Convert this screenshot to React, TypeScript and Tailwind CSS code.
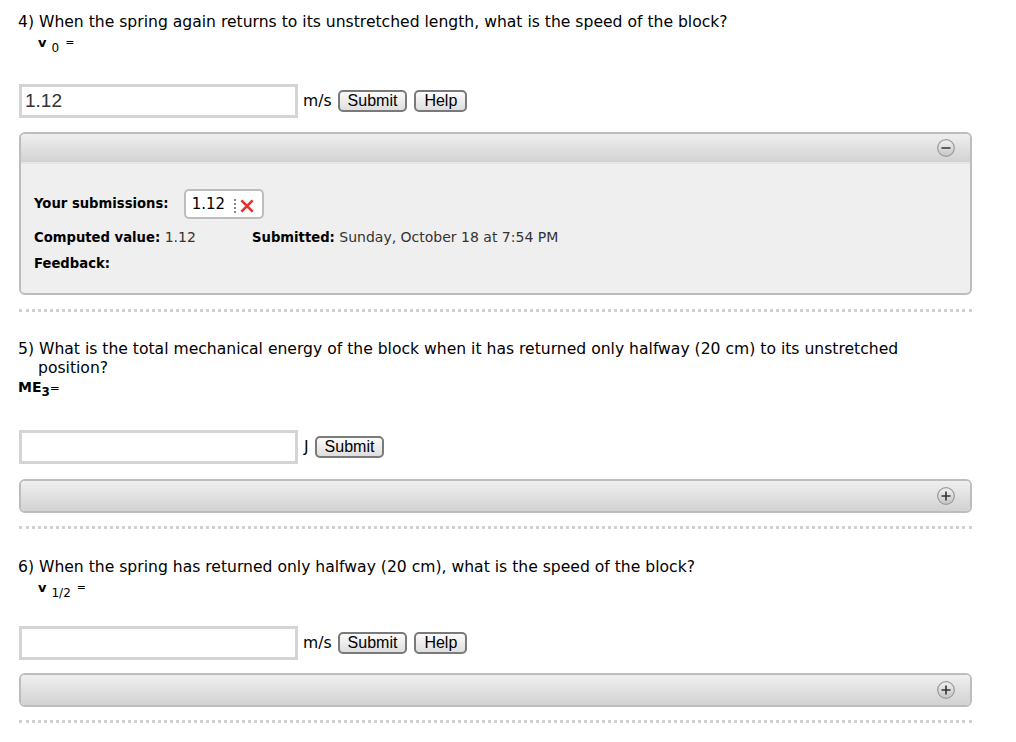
import React from "react";

const font = { fontFamily: '"DejaVu Sans", Verdana, sans-serif' };

function Btn({ children }: { children: React.ReactNode }) {
  return (
    <button
      className="h-[22px] px-[8px] rounded-[5px] border-2 border-[#7a7a7a] bg-gradient-to-b from-[#fbfbfb] to-[#dedede] text-[16px] leading-none text-black"
      style={{ fontFamily: '"Liberation Sans", Arial, sans-serif' }}
    >
      {children}
    </button>
  );
}

function CircleIcon({ plus }: { plus?: boolean }) {
  return (
    <svg width="20" height="20" viewBox="0 0 20 20">
      <defs>
        <linearGradient id={plus ? "gp" : "gm"} x1="0" y1="0" x2="0" y2="1">
          <stop offset="0" stopColor="#f2f2f2" />
          <stop offset="1" stopColor="#c4c4c4" />
        </linearGradient>
      </defs>
      <circle cx="10" cy="10.5" r="8.5" fill="#d8d8d8" opacity="0.6" />
      <circle cx="10" cy="10" r="8.3" fill={`url(#${plus ? "gp" : "gm"})`} stroke="#9a9a9a" strokeWidth="1.2" />
      <line x1="5.5" y1="10" x2="14.5" y2="10" stroke="#333" strokeWidth="1.6" />
      {plus && <line x1="10" y1="5.5" x2="10" y2="14.5" stroke="#333" strokeWidth="1.6" />}
    </svg>
  );
}

function PanelHeader({ open }: { open?: boolean }) {
  return (
    <div
      className={`flex items-center justify-end pr-[14px] bg-gradient-to-b from-[#efefef] to-[#d2d2d2] ${
        open ? "h-[30px] border-b-2 border-[#e6e6e6]" : "h-[30px]"
      }`}
    >
      <CircleIcon plus={!open} />
    </div>
  );
}

function Input({ value }: { value?: string }) {
  return (
    <div
      className="w-[279px] h-[34px] border-[3px] border-[#d4d4d4] bg-white flex items-center pl-[3px] text-[19px] text-[#333]"
      style={{ fontFamily: '"Liberation Sans", Arial, sans-serif' }}
    >
      {value}
    </div>
  );
}

function Dotted() {
  return <div className="mx-[19px] w-[953px] border-t-[3px] border-dotted border-[#d0d0d0]" />;
}

export default function App() {
  return (
    <div className="w-[1016px] h-[742px] bg-white text-[15.6px] text-black overflow-hidden" style={font}>
      {/* Q4 */}
      <div className="pt-[12px] pl-[18px] leading-[20px]">
        4) When the spring again returns to its unstretched length, what is the speed of the block?
      </div>
      <div className="mt-[1px] pl-[38px] h-[22px] leading-[20px] flex items-start">
        <span className="font-bold text-[13px]">v</span>
        <span className="text-[12px] ml-[5px] mt-[5px]">0</span>
        <span className="text-[11px] ml-[6px]">=</span>
      </div>
      <div className="mt-[29px] ml-[19px] flex items-center">
        <Input value="1.12" />
        <span className="ml-[5px] mt-[2px]">m/s</span>
        <span className="ml-[6px] mt-[2px]"><Btn>Submit</Btn></span>
        <span className="ml-[7px] mt-[2px]"><Btn>Help</Btn></span>
      </div>
      <div className="mt-[14px] ml-[19px] w-[953px] rounded-[6px] border-2 border-[#bdbdbd] overflow-hidden bg-[#efefef]">
        <PanelHeader open />
        <div className="pl-[13px] pt-[25px] pb-[20px] text-[14px]">
          <div className="flex items-center">
            <span className="font-bold text-[13.2px]">Your submissions:</span>
            <div className="ml-[15px] h-[30px] px-[6px] rounded-[5px] border-2 border-[#bdbdbd] bg-white flex items-center text-[15px]">
              <span>1.12</span>
              <span className="ml-[9px] h-[14px] border-l-2 border-dotted border-[#888] mt-[4px]" />
              <svg width="18" height="18" viewBox="0 0 16 16" className="ml-[2px] mt-[4px]">
                <path d="M3 3 L13 13 M13 3 L3 13" stroke="#e8322e" strokeWidth="2.4" />
              </svg>
            </div>
          </div>
          <div className="flex mt-[9px] leading-[19px]">
            <span className="w-[218px]">
              <b className="text-[13.2px]">Computed value:</b> <span className="text-[#333]">1.12</span>
            </span>
            <span>
              <b className="text-[13.2px]">Submitted:</b> <span className="text-[#333]">Sunday, October 18 at 7:54 PM</span>
            </span>
          </div>
          <div className="mt-[7px] font-bold text-[13.2px] leading-[19px]">Feedback:</div>
        </div>
      </div>
      <div className="mt-[14px]"><Dotted /></div>

      {/* Q5 */}
      <div className="pt-[28px] pl-[18px] leading-[19px]">
        5) What is the total mechanical energy of the block when it has returned only halfway (20 cm) to its unstretched
      </div>
      <div className="pl-[38px] leading-[19px]">position?</div>
      <div className="pl-[18px] leading-[19px] font-bold text-[14px]">
        ME<sub className="text-[12px] relative top-[4px]">3</sub><span className="font-normal text-[12px]">=</span>
      </div>
      <div className="mt-[32px] ml-[19px] flex items-center">
        <Input />
        <span className="ml-[6px] mt-[2px]">J</span>
        <span className="ml-[6px] mt-[2px]"><Btn>Submit</Btn></span>
      </div>
      <div className="mt-[15px] ml-[19px] w-[953px] rounded-[6px] border-2 border-[#bdbdbd] overflow-hidden">
        <PanelHeader />
      </div>
      <div className="mt-[13px]"><Dotted /></div>

      {/* Q6 */}
      <div className="pt-[28px] pl-[18px] leading-[20px]">
        6) When the spring has returned only halfway (20 cm), what is the speed of the block?
      </div>
      <div className="mt-[1px] pl-[38px] h-[22px] leading-[20px] flex items-start">
        <span className="font-bold text-[13px]">v</span>
        <span className="text-[12px] ml-[5px] mt-[5px]">1/2</span>
        <span className="text-[11px] ml-[6px]">=</span>
      </div>
      <div className="mt-[26px] ml-[19px] flex items-center">
        <Input />
        <span className="ml-[5px] mt-[2px]">m/s</span>
        <span className="ml-[6px] mt-[2px]"><Btn>Submit</Btn></span>
        <span className="ml-[7px] mt-[2px]"><Btn>Help</Btn></span>
      </div>
      <div className="mt-[13px] ml-[19px] w-[953px] rounded-[6px] border-2 border-[#bdbdbd] overflow-hidden">
        <PanelHeader />
      </div>
      <div className="mt-[13px]"><Dotted /></div>
    </div>
  );
}
